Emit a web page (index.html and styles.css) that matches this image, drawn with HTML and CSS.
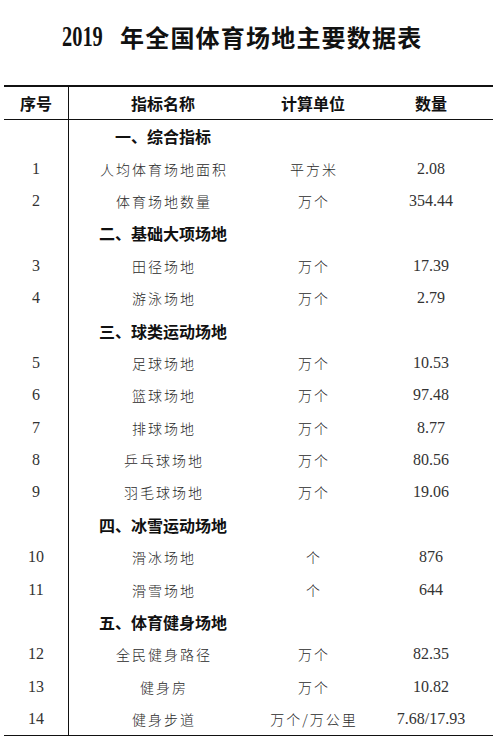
FILE: index.html
```html
<!DOCTYPE html>
<html lang="zh">
<head>
<meta charset="utf-8">
<link rel="stylesheet" href="styles.css">
</head>
<body>
<h1 class="title"><span class="num">2019</span><span class="cjk">年全国体育场地主要数据表</span></h1>
<div class="table">
  <div class="row head">
    <div class="c seq">序号</div>
    <div class="c">指标名称</div>
    <div class="c">计算单位</div>
    <div class="c">数量</div>
  </div>
  <div class="row sect"><div class="c seq"></div><div class="c">一、综合指标</div><div class="c"></div><div class="c"></div></div>
  <div class="row"><div class="c seq">1</div><div class="c name">人均体育场地面积</div><div class="c unit">平方米</div><div class="c val">2.08</div></div>
  <div class="row"><div class="c seq">2</div><div class="c name">体育场地数量</div><div class="c unit">万个</div><div class="c val">354.44</div></div>
  <div class="row sect"><div class="c seq"></div><div class="c">二、基础大项场地</div><div class="c"></div><div class="c"></div></div>
  <div class="row"><div class="c seq">3</div><div class="c name">田径场地</div><div class="c unit">万个</div><div class="c val">17.39</div></div>
  <div class="row"><div class="c seq">4</div><div class="c name">游泳场地</div><div class="c unit">万个</div><div class="c val">2.79</div></div>
  <div class="row sect"><div class="c seq"></div><div class="c">三、球类运动场地</div><div class="c"></div><div class="c"></div></div>
  <div class="row"><div class="c seq">5</div><div class="c name">足球场地</div><div class="c unit">万个</div><div class="c val">10.53</div></div>
  <div class="row"><div class="c seq">6</div><div class="c name">篮球场地</div><div class="c unit">万个</div><div class="c val">97.48</div></div>
  <div class="row"><div class="c seq">7</div><div class="c name">排球场地</div><div class="c unit">万个</div><div class="c val">8.77</div></div>
  <div class="row"><div class="c seq">8</div><div class="c name">乒乓球场地</div><div class="c unit">万个</div><div class="c val">80.56</div></div>
  <div class="row"><div class="c seq">9</div><div class="c name">羽毛球场地</div><div class="c unit">万个</div><div class="c val">19.06</div></div>
  <div class="row sect"><div class="c seq"></div><div class="c">四、冰雪运动场地</div><div class="c"></div><div class="c"></div></div>
  <div class="row"><div class="c seq">10</div><div class="c name">滑冰场地</div><div class="c unit">个</div><div class="c val">876</div></div>
  <div class="row"><div class="c seq">11</div><div class="c name">滑雪场地</div><div class="c unit">个</div><div class="c val">644</div></div>
  <div class="row sect"><div class="c seq"></div><div class="c">五、体育健身场地</div><div class="c"></div><div class="c"></div></div>
  <div class="row"><div class="c seq">12</div><div class="c name">全民健身路径</div><div class="c unit">万个</div><div class="c val">82.35</div></div>
  <div class="row"><div class="c seq">13</div><div class="c name">健身房</div><div class="c unit">万个</div><div class="c val">10.82</div></div>
  <div class="row"><div class="c seq">14</div><div class="c name">健身步道</div><div class="c unit">万个/万公里</div><div class="c val">7.68/17.93</div></div>
</div>
</body>
</html>
```
FILE: styles.css
```css
html, body {
  margin: 0;
  padding: 0;
  background: #ffffff;
}
body {
  width: 496px;
  height: 753px;
  overflow: hidden;
  font-family: "Liberation Serif", "Noto Sans CJK SC", serif;
  color: #222;
}
.title {
  margin: 0;
  height: 72px;
  display: flex;
  align-items: center;
  justify-content: flex-start;
  padding-left: 62px;
  font-size: 24px;
  font-weight: bold;
  color: #111;
  white-space: nowrap;
}
.title .num {
  display: inline-block;
  font-family: "Liberation Serif", serif;
  font-size: 30px;
  transform: scaleX(0.68);
  transform-origin: left center;
  width: 58px;
}
.title .cjk {
  display: inline-block;
  font-family: "Noto Sans CJK SC", sans-serif;
  font-size: 24px;
  letter-spacing: 1.2px;
}
.table {
  margin: 13px 3px 0 4px;
  border-top: 2px solid #111;
  border-bottom: 1.5px solid #111;
}
.row {
  display: grid;
  grid-template-columns: 65px 188px 112px 124px;
  height: 32.4px;
}
.row.head {
  height: 32px;
  border-bottom: 1px solid #111;
  font-family: "Noto Sans CJK SC", sans-serif;
  font-weight: bold;
  font-size: 16px;
  color: #111;
}
.c {
  display: flex;
  align-items: center;
  justify-content: center;
  white-space: nowrap;
}
.seq {
  border-right: 1px solid #111;
  font-size: 16px;
  color: #333;
}
.head .seq {
  color: #111;
  font-size: 16px;
}
.sect {
  font-family: "Noto Sans CJK SC", sans-serif;
  font-weight: bold;
  font-size: 16px;
  color: #111;
}
.sect .seq {
  font-family: "Liberation Serif", serif;
}
.name, .unit {
  font-family: "Noto Sans CJK SC", sans-serif;
  font-size: 14px;
  font-weight: 300;
  letter-spacing: 2px;
  padding-left: 2px;
  color: #2a2a2a;
}
.val {
  font-size: 16px;
  color: #333;
}
```
